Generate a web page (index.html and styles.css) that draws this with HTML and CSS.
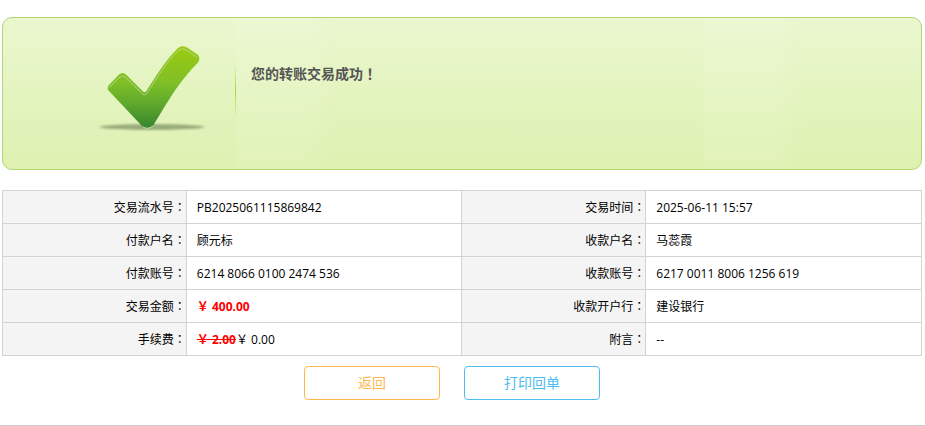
FILE: index.html
```html
<!DOCTYPE html>
<html lang="zh-CN">
<head>
    <meta charset="UTF-8">
    <meta name="viewport" content="width=device-width, initial-scale=1.0">
    <title>转账结果</title>
    <link rel="stylesheet" href="styles.css">
</head>
<body>
    <div class="container">
        <div class="result">
            <div class="result-icon">
                <svg width="120" height="96" viewBox="0 0 120 96" aria-hidden="true">
                    <defs>
                        <linearGradient id="tick" x1="0" y1="0" x2="0" y2="1">
                            <stop offset="0" stop-color="#9dcb12"/>
                            <stop offset="0.45" stop-color="#7fbf26"/>
                            <stop offset="0.7" stop-color="#5fa92c"/>
                            <stop offset="1" stop-color="#37852f"/>
                        </linearGradient>
                        <filter id="soft" x="-10%" y="-100%" width="120%" height="300%">
                            <feGaussianBlur stdDeviation="2 1"/>
                        </filter>
                    </defs>
                    <ellipse cx="58" cy="87" rx="52" ry="3" fill="#98ac7b" filter="url(#soft)"/>
                    <path d="M14.500 45.500 Q12.500 48.500 15 51 L48 86 Q54 90.500 59.500 85 C75 60 84 43 104 22.500 Q107 18 103.500 14.500 L93 7.500 Q88 4.500 83.500 8.500 C70 22 61 38 52 51.500 Q50.500 53 49 51.500 L32 34.500 Q28.500 31.500 25 34.500 Z" fill="url(#tick)"/>
                    <path d="M15 47.500 L25 37.500 Q28.500 34.500 32 37.500 L48.500 54 Q50.500 56 52.500 53.500 C62 40 71 23 84.500 10.500 Q88 7.500 92 10 L102.500 17" fill="none" stroke="#b0d886" stroke-width="1" stroke-linecap="round"/>
                    <path d="M49 87 Q54 90 59 86" fill="none" stroke="#c3dfa5" stroke-width="1"/>
                </svg>
            </div>
            <div class="result-text">您的转账交易成功<span class="mark" lang="zh-TW">！</span></div>
        </div>

        <table class="detail">
            <tr>
                <th>交易流水号<span class="mark" lang="zh-TW">：</span></th>
                <td>PB2025061115869842</td>
                <th>交易时间<span class="mark" lang="zh-TW">：</span></th>
                <td>2025-06-11 15:57</td>
            </tr>
            <tr>
                <th>付款户名<span class="mark" lang="zh-TW">：</span></th>
                <td>顾元标</td>
                <th>收款户名<span class="mark" lang="zh-TW">：</span></th>
                <td>马蕊霞</td>
            </tr>
            <tr>
                <th>付款账号<span class="mark" lang="zh-TW">：</span></th>
                <td>6214 8066 0100 2474 536</td>
                <th>收款账号<span class="mark" lang="zh-TW">：</span></th>
                <td>6217 0011 8006 1256 619</td>
            </tr>
            <tr>
                <th>交易金额<span class="mark" lang="zh-TW">：</span></th>
                <td><strong class="amount">￥ 400.00</strong></td>
                <th>收款开户行<span class="mark" lang="zh-TW">：</span></th>
                <td>建设银行</td>
            </tr>
            <tr>
                <th>手续费<span class="mark" lang="zh-TW">：</span></th>
                <td><del class="amount">￥ 2.00</del>￥ 0.00</td>
                <th>附言<span class="mark" lang="zh-TW">：</span></th>
                <td>--</td>
            </tr>
        </table>

        <div class="buttons">
            <button type="button" class="btn btn-back">返回</button>
            <button type="button" class="btn btn-print">打印回单</button>
        </div>
    </div>
</body>
</html>
```
FILE: styles.css
```css
* {
    margin: 0;
    padding: 0;
    box-sizing: border-box;
}

body {
    font-family: "Open Sans", "Noto Sans CJK SC", sans-serif;
    font-size: 12px;
    line-height: 20px;
    color: #000;
    background-color: #fff;
}

.container {
    padding: 17px 3px 25px 2px;
    border-bottom: 1px solid #ccc;
}

.result {
    display: flex;
    min-height: 153px;
    border: 1px solid #b2d675;
    border-radius: 10px;
    background-image:
        linear-gradient(to right, rgba(255, 255, 255, 0.08) 75px, rgba(255, 255, 255, 0) 100px),
        linear-gradient(#eaf7cf, #def1b0);
    background-position: 232px 0, 0 0;
    background-size: 468px 100%, 100% 100%;
}

.result-icon {
    width: 233px;
    padding: 22px 0 0 91px;
    background: linear-gradient(rgba(165, 215, 50, 0), #a5d732, rgba(165, 215, 50, 0)) no-repeat right 45px / 1px 56px;
}

.result-text {
    padding: 46px 0 0 15px;
    font-size: 14px;
    font-weight: bold;
    color: #555;
}

/* centred full-width punctuation */
.mark {
    font-family: "Noto Sans CJK TC", sans-serif;
    line-height: 1;
}

.detail {
    width: 100%;
    margin-top: 20px;
    border-collapse: collapse;
    table-layout: fixed;
}

.detail th, .detail td {
    height: 33px;
    padding-top: 2px;
    border: 1px solid #d3d3d3;
}

.detail th {
    width: 20%;
    font-weight: normal;
    text-align: right;
    background-color: #f4f4f4;
}

.detail td {
    width: 30%;
    padding-left: 10px;
}

.amount {
    font-weight: bold;
    color: #f00;
}

.buttons {
    display: flex;
    justify-content: center;
    gap: 24px;
    margin-top: 10px;
    padding-right: 20px;
}

.btn {
    width: 136px;
    height: 34px;
    padding-bottom: 2px;
    border: 1px solid;
    border-radius: 4px;
    background-color: #fff;
    font-family: inherit;
    font-size: 14px;
    cursor: pointer;
}

.btn-back {
    color: #fdb94e;
}

.btn-print {
    color: #4dbcee;
}
```
